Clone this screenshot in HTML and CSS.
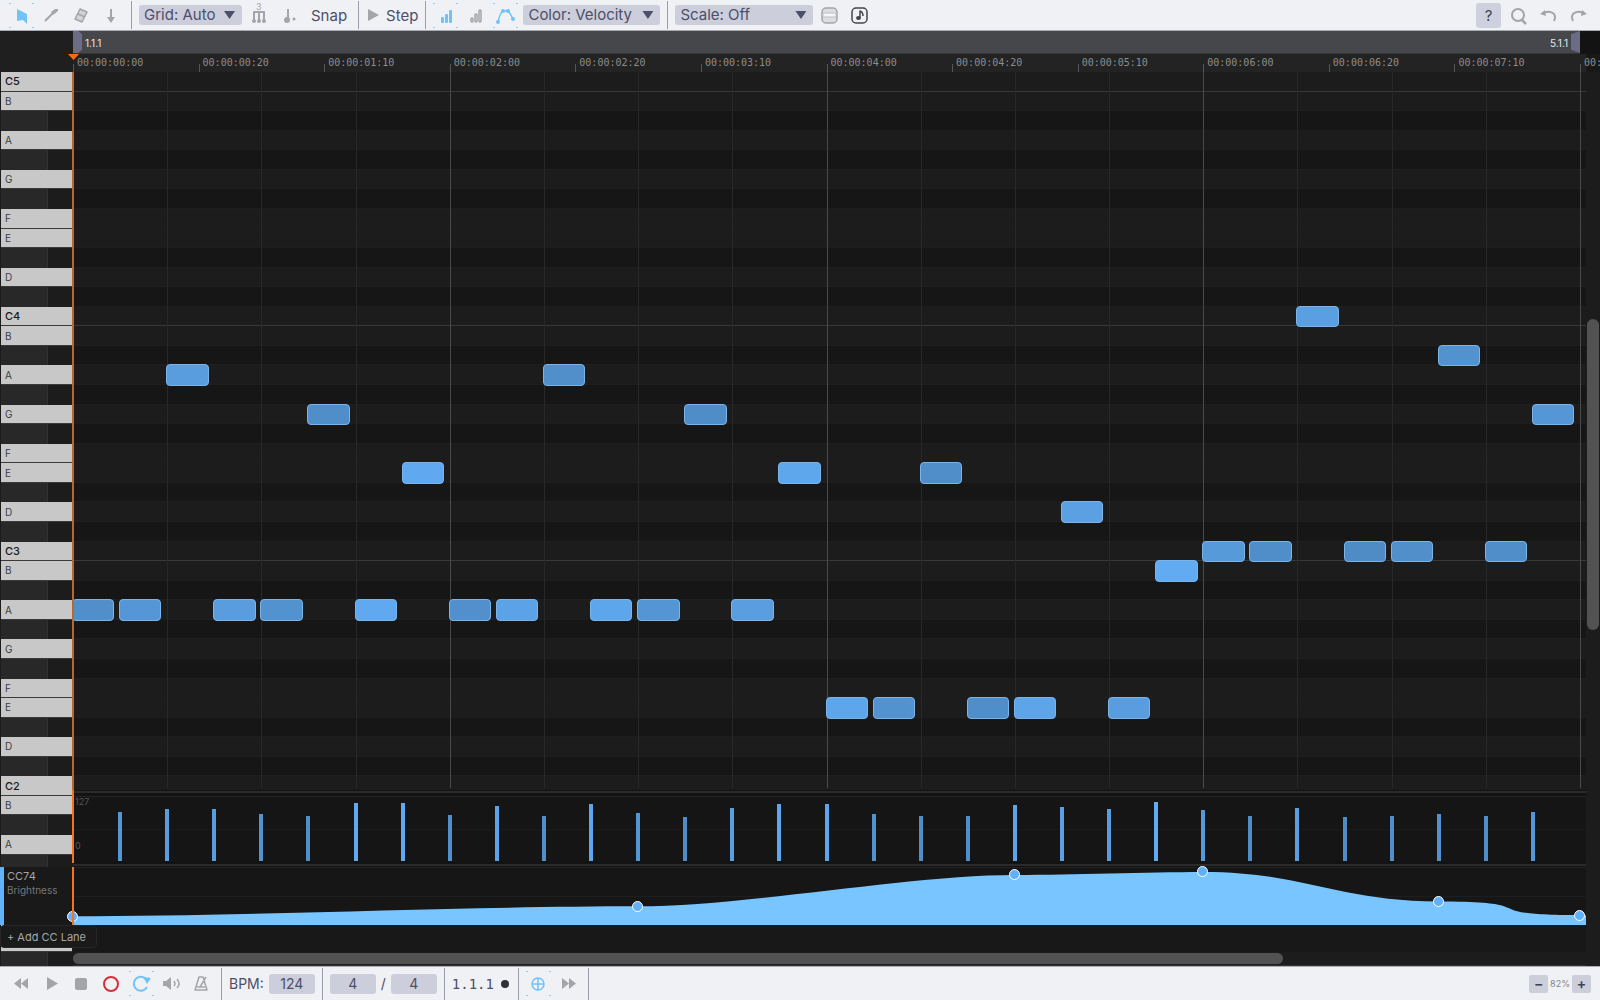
FILE: index.html
```html
<!DOCTYPE html>
<html lang="en">
<head>
<meta charset="utf-8">
<title>Piano Roll</title>
<link rel="stylesheet" href="styles.css">
</head>
<body>
<header class="bar toolbar">
  <button class="tool active" aria-label="Select"><svg viewBox="0 0 25 25"><path class="fill" d="M8 6l10 5v10l-4-4-6 1z"/></svg></button>
  <button class="tool" aria-label="Draw"><svg viewBox="0 0 25 25"><path class="line" d="M6 18l9-9"/><path class="fill" d="M12 9l4-3h3v2l-5 4z"/></svg></button>
  <button class="tool" aria-label="Erase"><svg viewBox="0 0 25 25"><path class="line thin soft" d="M11 6l7 3-5 10-7-3z"/><path class="line thin" d="M9 11l7 3"/></svg></button>
  <button class="tool" aria-label="Velocity"><svg viewBox="0 0 25 25"><path class="line" d="M12 6v10"/><path class="fill" d="M8 14h8l-4 6z"/></svg></button>
  <span class="sep"></span>
  <label class="pick pick-grid"><select aria-label="Grid"><option>Grid: Auto</option></select></label>
  <button class="tool" aria-label="Triplet"><svg viewBox="0 0 25 25"><path class="line" d="M7 18V9h10v9M12 9v9"/><g class="fill"><circle cx="7" cy="18" r="2"/><circle cx="12" cy="18" r="2"/><circle cx="17" cy="18" r="2"/></g><text x="9" y="7">3</text></svg></button>
  <button class="tool" aria-label="Dotted"><svg viewBox="0 0 25 25"><path class="line" d="M11 6v12"/><g class="fill"><circle cx="10" cy="17" r="3"/><circle cx="17" cy="16" r="1.5"/></g></svg></button>
  <button class="word">Snap</button>
  <span class="sep"></span>
  <button class="word step"><svg viewBox="0 0 12 12"><path class="fill" d="M1 0l11 6-11 6z"/></svg>Step</button>
  <span class="sep"></span>
  <button class="tool active" aria-label="Velocity lane"><svg viewBox="0 0 25 25"><g class="fill"><rect x="8" y="14" width="3" height="6" rx="1"/><rect x="12" y="11" width="3" height="9" rx="1"/><rect x="16" y="7" width="3" height="13" rx="1"/></g></svg></button>
  <button class="tool" aria-label="Release lane"><svg viewBox="0 0 25 25"><g class="line thin"><rect x="8" y="15" width="2" height="4" rx="1"/><rect x="12" y="11" width="2" height="8" rx="1"/><rect x="16" y="7" width="2" height="12" rx="1"/></g></svg></button>
  <button class="tool active" aria-label="CC lanes"><svg viewBox="0 0 25 25"><path class="line thin" d="M5 19Q7 10 10 8h5q2 2 5 8"/><g class="fill"><circle cx="5" cy="19" r="2"/><circle cx="10" cy="8" r="2"/><circle cx="15" cy="8" r="2"/><circle cx="20" cy="16" r="2"/></g></svg></button>
  <label class="pick pick-color"><select aria-label="Color"><option>Color: Velocity</option></select></label>
  <span class="sep"></span>
  <label class="pick pick-scale"><select aria-label="Scale"><option>Scale: Off</option></select></label>
  <button class="tool" aria-label="Fold"><svg viewBox="0 0 25 25"><rect class="line thin tint" x="4" y="5" width="15" height="15" rx="4"/><path class="line band" d="M5 10h13v4H5z"/></svg></button>
  <button class="tool dark" aria-label="Preview notes"><svg viewBox="0 0 25 25"><rect class="line thin" x="4" y="5" width="15" height="15" rx="4"/><path class="line thin" d="M12 15V8q3 1 3 5"/><ellipse class="fill" cx="10.500" cy="15" rx="2.500" ry="2"/></svg></button>
  <span class="grow"></span>
  <button class="tool help" aria-label="Help">?</button>
  <button class="tool" aria-label="Search"><svg viewBox="0 0 25 25"><circle class="line" cx="12" cy="12" r="6"/><path class="line bold" d="M16 17l4 4"/></svg></button>
  <button class="tool" aria-label="Undo"><svg viewBox="0 0 25 25"><path class="line" d="M8 10q6-3 10 1 2 3 0 7"/><path class="fill" d="M4 11l5-4 1 6z"/></svg></button>
  <button class="tool" aria-label="Redo"><svg viewBox="0 0 25 25"><path class="line" d="M17 10q-6-3-10 1-2 3 0 7"/><path class="fill" d="M21 11l-5-4-1 6z"/></svg></button>
</header>

<main class="editor">
  <div class="corner"></div>
  <div class="loop"><div class="range"><span>1.1.1</span><span>5.1.1</span></div></div>
  <div class="ruler"><div class="span" id="ruler"></div></div>
  <div class="keyboard"><div class="pitches" id="keys"></div></div>
  <section class="roll" aria-label="Notes">
    <div class="pitches" id="rows"></div>
    <div class="span over" id="beats"></div>
    <div class="span over pitch-height" id="notes"></div>
  </section>
  <div class="grip grip-a"></div>
  <section class="velocity" aria-label="Velocity">
    <div class="span" id="velocity"></div>
    <div class="range-label"><span>127</span><span>0</span></div>
  </section>
  <div class="grip grip-b"></div>
  <div class="cc-label"><b>CC74</b><span>Brightness</span></div>
  <section class="cc" aria-label="Brightness">
    <svg viewBox="0 0 1513 58" preserveAspectRatio="none"><path id="curve"/></svg>
    <div class="span over" id="points"></div>
  </section>
  <div class="playhead head"></div>
  <div class="playhead strong"></div>
  <div class="playhead lane"></div>
  <footer class="below">
    <div class="hscroll"><div class="thumb"></div></div>
  </footer>
  <button class="add">+ Add CC Lane</button>
  <div class="vscroll"><div class="thumb"></div></div>
</main>

<footer class="bar transport">
  <button class="tool" aria-label="Rewind"><svg viewBox="0 0 25 25"><path class="fill" d="M12 7v11l-7-5.500zM19 7v11l-7-5.500z"/></svg></button>
  <button class="tool" aria-label="Play"><svg viewBox="0 0 25 25"><path class="fill" d="M8 6l11 6.500-11 6.500z"/></svg></button>
  <button class="tool" aria-label="Stop"><svg viewBox="0 0 25 25"><rect class="fill" x="6" y="7" width="12" height="12" rx="2"/></svg></button>
  <button class="tool rec" aria-label="Record"><svg viewBox="0 0 25 25"><circle class="line" cx="12" cy="13" r="7"/></svg></button>
  <button class="tool active" aria-label="Loop"><svg viewBox="0 0 25 25"><path class="line" d="M17 8a7 7 0 1 0 1 8"/><path class="fill" d="M14 6l8 1-4 6z"/></svg></button>
  <button class="tool" aria-label="Monitor"><svg viewBox="0 0 25 25"><path class="fill" d="M4 10h3l5-4v13l-5-4H4z"/><path class="line thin" d="M15 10q2 3 0 5M18 8q4 5 0 9"/></svg></button>
  <button class="tool" aria-label="Metronome"><svg viewBox="0 0 25 25"><path class="line thin" d="M10 6h4l4 13H6zM11 16l6-10M8 16h8"/></svg></button>
  <span class="sep"></span>
  <label for="bpm">BPM:</label><input id="bpm" value="124">
  <span class="sep"></span>
  <input aria-label="Beats per bar" value="4"><span class="slash">/</span><input aria-label="Beat unit" value="4">
  <span class="sep"></span>
  <span class="position">1.1.1</span><span class="dot"></span>
  <span class="sep"></span>
  <button class="tool active" aria-label="Follow playhead"><svg viewBox="0 0 25 25"><circle class="line thin" cx="12" cy="13" r="6"/><path class="line thin" d="M6 13h12M12 7v12"/></svg></button>
  <button class="tool" aria-label="Fast forward"><svg viewBox="0 0 25 25"><path class="fill" d="M6 7v11l7-5.500zM13 7v11l7-5.500z"/></svg></button>
  <span class="sep"></span>
  <span class="grow"></span>
  <div class="zoom"><button aria-label="Zoom out">−</button><span>82%</span><button aria-label="Zoom in">+</button></div>
</footer>
<script src="app.js"></script>
</body>
</html>
```
FILE: styles.css
```css
* { box-sizing: border-box; }

body {
  margin: 0;
  height: 100vh;
  display: flex;
  flex-direction: column;
  overflow: hidden;
  background: #181818;
  font-family: Inter, "Liberation Sans", sans-serif;
  font-size: 15px;
  color: #4c4f69;
}

button, input, select { font: inherit; color: inherit; border: 0; padding: 0; margin: 0; background: none; }

/* Bars */
.bar { display: flex; align-items: center; gap: 5px; background: #eff1f5; flex: none; white-space: nowrap; }
.toolbar { height: 31px; padding: 0 9px; border-bottom: 1px solid #a9aab4; }
.transport { height: 34px; padding: 0 9px; border-top: 1px solid #a9aab4; font-size: 14px; }
.sep { width: 1px; height: 28px; margin: 0 2px; background: #9a9bab; flex: none; }
.transport .sep { height: 32px; }
.grow { flex: 1; }

.tool { width: 25px; height: 25px; flex: none; display: grid; place-items: center; color: #a4a5a8; }
.tool svg { width: 25px; height: 25px; }
.tool text { font-size: 9px; fill: currentColor; }
.fill { fill: currentColor; }
.line { fill: none; stroke: currentColor; stroke-width: 2; stroke-linejoin: round; }
.soft { fill: #d2d3d6; }
.thin { stroke-width: 1.5; }
.bold { stroke-width: 2.5; }
.tint { fill: #dcdde0; }
.band { fill: #f4f5f7; stroke-width: 1; stroke: #bfc0c4; }
.active {
  color: #6fc3f8;
  --c: #8fcdf6;
  background:
    linear-gradient(var(--c), var(--c)) 0 0 / 2px 1px,
    linear-gradient(var(--c), var(--c)) 100% 0 / 2px 1px,
    linear-gradient(var(--c), var(--c)) 0 100% / 2px 1px,
    linear-gradient(var(--c), var(--c)) 100% 100% / 2px 1px;
  background-repeat: no-repeat;
}
.dark { color: #45464d; }
.rec { color: #d62f3a; }
.help { background: #ced0de; border-radius: 3px; color: #3f4158; }

.pick { position: relative; height: 20px; background: #cccedb; border-radius: 3px; }
.pick::after {
  content: "";
  position: absolute;
  right: 7px;
  top: 6px;
  width: 11px;
  height: 8px;
  background: #4c4f69;
  clip-path: polygon(0 0, 100% 0, 50% 100%);
  pointer-events: none;
}
.pick select { appearance: none; display: block; width: 100%; height: 20px; line-height: 20px; padding-left: 5px; }
.pick-grid { width: 103px; }
.pick-color { width: 137px; }
.pick-scale { width: 138px; }

.word { padding: 0 4px; }
.step { display: flex; align-items: center; gap: 7px; padding: 0 0 0 1px; }
.step svg { width: 12px; height: 12px; color: #a4a5a8; }

.transport input { width: 46px; height: 20px; border-radius: 3px; background: #cccedb; text-align: center; }
.slash { width: 5px; text-align: center; }
.position { font: 14px "DejaVu Sans Mono", monospace; }
.dot { width: 8px; height: 8px; border-radius: 50%; background: #303136; margin: 0 2px; }
.zoom { display: flex; align-items: center; gap: 2px; font-size: 9px; color: #85868c; }
.zoom button { width: 19px; height: 18px; border-radius: 2px; background: #ccceda; color: #3f4158; font-size: 14px; font-weight: 600; line-height: 18px; }

/* Editor */
.editor {
  flex: 1;
  min-height: 0;
  display: grid;
  grid-template-columns: 73px minmax(0, 1fr) 14px;
  grid-template-rows: 23px 18px minmax(0, 1fr) 6px 65px 6px 58px 41px;
}
.corner { grid-area: 1 / 1 / 3 / 2; background: #1f1f1f; }
.span { position: relative; height: 100%; margin-right: 6px; }
.over { position: absolute; top: 0; left: 0; right: 0; }
.pitches, .pitch-height { height: 900px; }
.pitches { display: grid; grid-template-rows: repeat(46, 1fr); }

.loop { grid-area: 1 / 2 / 2 / 4; background: #131313; padding-right: 20px; }
.range { height: 100%; display: flex; align-items: center; justify-content: space-between; background: #46474b; border-bottom: 1px solid #35363a; color: #e6e7ea; font-size: 10px; line-height: 24px; }
.range span { display: flex; gap: 3px; height: 100%; }
.range span:first-child::before, .range span:last-child::after { content: ""; width: 9px; height: 100%; background: #6b6c85; }
.range span:first-child::before { clip-path: polygon(0 0, 60% 0, 100% 15%, 100% 85%, 60% 100%, 0 100%); }
.range span:last-child::after { clip-path: polygon(100% 0, 0 15%, 0 85%, 100% 100%); }

.ruler { grid-area: 2 / 2 / 3 / 4; background: linear-gradient(90deg, #232323 calc(100% - 14px), #181818 0); overflow: hidden; padding-right: 14px; }
.tick { position: absolute; bottom: 0; height: 18px; padding-left: 4px; font: 10px/18px "DejaVu Sans Mono", monospace; color: #8d8d8d; }
.tick::before { content: ""; position: absolute; left: 0; bottom: 0; width: 1px; height: 8px; background: #555; }

.keyboard { grid-area: 3 / 1 / 9 / 2; overflow: hidden; background: #1c1c1c; padding: 0 1px; }
.key { display: flex; align-items: center; padding-left: 4px; font-size: 10px; color: #3c3c3c; background: #c8c8c8; border-bottom: 1px solid #3a3a3a; }
.key.c { font-size: 11px; font-weight: 500; color: #1a1a1a; }
.key.black { width: 47px; background: #282828; border: 0; border-right: 1px solid #323232; }

.roll { grid-area: 3 / 2 / 4 / 3; position: relative; overflow: hidden; background: #1c1c1c; }
.row { background: #1c1c1c; border-bottom: 1px solid #1e1e1e; }
.row.black { background: #161616; }
.row.c { border-bottom: 1px solid #383838; }
.beat { position: absolute; top: 0; bottom: 2px; width: 1px; background: #282828; }
.beat.bar-line { background: #4a4a4a; }
.note { position: absolute; border: 1px solid #7ab4e8; border-radius: 4px; }

.grip { background: linear-gradient(#2b2b2b, #2b2b2b) 0 1px / 100% 2px no-repeat #131313; }
.grip-a { grid-area: 4 / 2 / 5 / 3; }
.grip-b { grid-area: 6 / 2 / 7 / 3; background-position: 0 3px; }

.velocity { grid-area: 5 / 2 / 6 / 3; position: relative; background: linear-gradient(#1b1b1b, #1b1b1b) 0 50% / 100% 1px no-repeat #151515; border-top: 1px solid #242424; }
.stem { position: absolute; bottom: 0; width: 4px; margin-left: -2px; }
.range-label { position: absolute; top: 0; left: 2px; height: 54px; display: flex; flex-direction: column; justify-content: space-between; font-size: 9px; line-height: 10px; color: #555; }

.cc-label { grid-area: 7 / 1 / 8 / 2; z-index: 1; display: flex; flex-direction: column; background: #191919; border-left: 4px solid #62b3fb; padding: 2px 3px; font-size: 10px; line-height: 14px; color: #777; }
.cc-label b { font-size: 11px; font-weight: 400; color: #a5a5a5; }
.cc { grid-area: 7 / 2 / 8 / 3; position: relative; z-index: 1; background: linear-gradient(#1e1e1e, #1e1e1e) 0 50% / 100% 1px no-repeat #161616; border-top: 1px solid #222; }
.cc svg { display: block; width: 100%; height: 57px; fill: #79c5ff; }
.point { position: absolute; width: 11px; height: 11px; margin: -6px; border: 1px solid #fff; border-radius: 50%; background: #62b0f8; }

.playhead { z-index: 2; width: 2px; background: #f5731f; }
.playhead.head { grid-area: 3 / 2 / 4 / 3; margin-left: -1px; background: #b9672f; }
.playhead.head::before { content: ""; display: block; width: 11px; height: 6px; margin: -18px -4px 0; background: #ff6a13; clip-path: polygon(0 0, 100% 0, 50% 100%); }
.playhead.strong { grid-area: 4 / 2 / 7 / 3; margin: 0 0 4px -1px; }
.playhead.lane { grid-area: 7 / 2 / 8 / 3; margin-left: -1px; }

.below { grid-area: 8 / 2 / 9 / 3; display: flex; flex-direction: column; justify-content: flex-end; background: #181818; }
.hscroll { height: 14px; padding: 1px 0; background: #1c1c1c; border-bottom: 1px solid #333; }
.thumb { background: #525252; border-radius: 6px; }
.hscroll .thumb { width: 80%; height: 11px; }
.vscroll { grid-area: 3 / 3 / 9 / 4; padding: 0 1px; background: #1c1c1c; display: grid; grid-template-rows: 247fr 310fr 336fr; }
.vscroll .thumb { grid-row: 2; }
.add { grid-area: 8 / 1 / 9 / 3; z-index: 3; justify-self: start; align-self: start; height: 23px; padding: 0 10px 0 6px; font-size: 11px; color: #a8a8a8; background: #1a1a1a; border: 1px solid #262626; border-radius: 4px; }
```
FILE: app.js
```js
const BEATS = 16;
const PITCHES = 46;
const LABELLED = 40;
const OCTAVE = ['C', 'B', 'A#', 'A', 'G#', 'G', 'F#', 'F', 'E', 'D#', 'D', 'C#'];

const at = (beat) => (beat / BEATS) * 100 + '%';
const add = (parent, className, style, text) => {
  const el = document.createElement('div');
  el.className = className;
  Object.assign(el.style, style);
  if (text) el.textContent = text;
  document.getElementById(parent).append(el);
};

// Keys and rows, from C5 downwards; keys behind the CC lanes carry no name
for (let i = 0; i < PITCHES; i++) {
  const name = OCTAVE[i % 12];
  const kind = name.includes('#') ? ' black' : name === 'C' ? ' c' : '';
  const label = name === 'C' ? 'C' + (5 - i / 12) : kind ? '' : name;
  add('keys', 'key' + kind, {}, i < LABELLED ? label : '');
  add('rows', 'row' + kind, {});
}

for (let b = 0; b <= BEATS; b++) {
  add('beats', b % 4 ? 'beat' : 'beat bar-line', { left: at(b) });
}

// One ruler label every 20 frames at 30 fps
const two = (n) => String(n).padStart(2, '0');
for (let i = 0; i <= 12; i++) {
  const frames = i * 20;
  add('ruler', 'tick', { left: at(i * 4 / 3) }, `00:00:${two(Math.floor(frames / 30))}:${two(frames % 30)}`);
}

// [row below C5, velocity] for each half beat
const notes = [
  [27, 90], [27, 98], [15, 104], [27, 104], [27, 93], [17, 89], [27, 116], [20, 116],
  [27, 91], [27, 109], [15, 90], [27, 113], [27, 96], [17, 88], [27, 105], [20, 114],
  [32, 113], [32, 93], [20, 89], [32, 89], [32, 111], [22, 107], [32, 104], [25, 118],
  [24, 101], [24, 89], [12, 106], [24, 87], [24, 90], [14, 93], [24, 89], [17, 98],
];
notes.forEach(([row, velocity], i) => {
  const d = velocity - 89;
  const background = `rgb(${Math.round(80 + d * 0.6)} ${Math.round(142 + d)} ${Math.round(201 + d * 1.45)})`;
  add('notes', 'note', {
    left: `calc(${at(i / 2)} - 1px)`,
    width: at(0.45),
    top: `calc(${row / PITCHES * 100}% - 1px)`,
    height: `calc(${100 / PITCHES}% + 2px)`,
    background,
  });
  if (i) add('velocity', 'stem', { left: at(i / 2), height: velocity / 127 * 100 + '%', background });
});

// Brightness automation: beat, y, easing of the segment that ends here
const points = [[0, 49, 0.3], [6, 39, 0.3], [10, 7, 0.28], [12, 4, 0.3], [14.5, 34, 0.43], [16, 48, 0.78]];
const x = (beat) => beat * 1507 / BEATS;
let d = `M0 ${points[0][1]}`;
points.forEach(([beat, y, ease], i) => {
  add('points', 'point', { left: at(beat), top: y + 'px' });
  if (!i) return;
  const [b0, y0] = points[i - 1];
  const reach = (x(beat) - x(b0)) * ease;
  d += ` C${x(b0) + reach} ${y0} ${x(beat) - reach} ${y} ${x(beat)} ${y}`;
});
document.getElementById('curve').setAttribute('d', d + ' H1513 V58 H0 Z');
```
